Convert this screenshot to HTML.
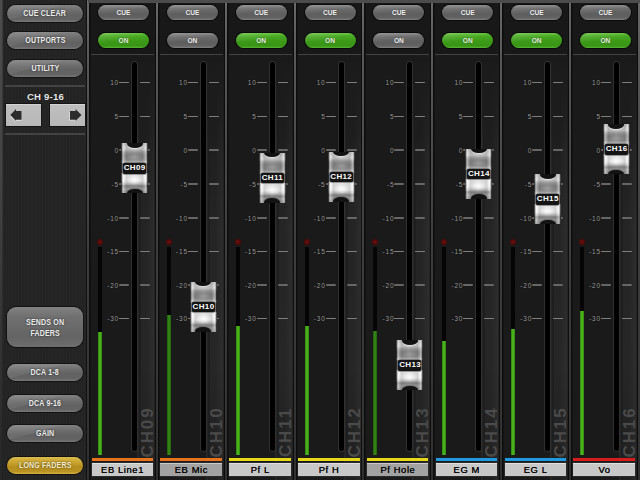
<!DOCTYPE html><html><head><meta charset="utf-8"><style>

*{margin:0;padding:0;box-sizing:border-box}
html,body{width:640px;height:480px;overflow:hidden;background:#1a1a1a;font-family:"Liberation Sans",sans-serif}
.abs{position:absolute}
#left{position:absolute;left:0;top:0;width:88px;height:480px;background:#242424;
 background-image:repeating-linear-gradient(90deg,rgba(255,255,255,0.012) 0 1px,rgba(0,0,0,0.025) 1px 3px)}
#left .edge{position:absolute;left:0;top:0;width:3px;height:480px;background:linear-gradient(90deg,rgba(0,0,0,0),rgba(0,0,0,0) 65%,rgba(0,0,0,.4)),linear-gradient(#4c4c4c,#444 35%,#363636 65%,#262626)}
.btn{position:absolute;left:7px;width:76px;height:17px;border-radius:9px;
 background:linear-gradient(165deg,rgba(255,255,255,.1) 0,rgba(255,255,255,.06) 40%,rgba(255,255,255,0) 41%),linear-gradient(#828282,#6c6c6c 35%,#626262 60%,#646464 85%,#787878);
 box-shadow:0 0 0 1px #121212;color:#eeeeee;font-weight:bold;font-size:7.8px;letter-spacing:0.2px;text-align:center;line-height:17px;
 text-shadow:0 0 2px #222}
.btn span{display:inline-block;transform:scale(0.9,1.1)}
.sep{position:absolute;height:2px;background:#434343}
.arrow{position:absolute;top:104px;height:22px;background:linear-gradient(#d4d4d4 0,#d4d4d4 1px,#bebebe 1.5px,#b8b8b8);box-shadow:0 0 0 1px #141414}
.strip{position:absolute;top:0;width:69px;height:480px;background:#1a1a1a}
.upper{position:absolute;left:0;top:0;width:69px;height:55px;background:#181818}
.div{position:absolute;top:0;width:2px;height:480px;background:linear-gradient(#6a6a6a,#585858 12%,#3e3e3e 50%,#303030 100%);box-shadow:-1px 0 0 rgba(0,0,0,.5),1.5px 0 0 rgba(0,0,0,.5)}
.topband{position:absolute;left:88px;top:0;width:552px;height:3px;background:#4c4c4c}
.cue{position:absolute;left:11px;width:51px;height:15px;border-radius:8px;
 background:linear-gradient(170deg,rgba(255,255,255,.12),rgba(255,255,255,0) 45%),linear-gradient(#8a8a8a,#6c6c6c 25%,#5e5e5e 60%,#626262 85%,#808080);
 box-shadow:0 0 0 1px #0a0a0a;color:#f2f2f2;font-size:6.6px;font-weight:bold;text-align:center;line-height:15px;
 text-shadow:0 0 1px #333}
.on{background:linear-gradient(170deg,rgba(255,255,255,.18),rgba(255,255,255,0) 45%),linear-gradient(#64c23a 0,#48a822 22%,#3c9a18 55%,#399416 85%,#56b230 100%);color:#e4f8dc}
.ssep{position:absolute;left:4px;top:53.6px;width:63px;height:1.8px;background:#434343}
.track{position:absolute;left:45px;top:61.5px;width:5px;height:389.5px;background:#000;border-radius:3px;box-shadow:0 0 0 1px #303030}
.rpanel{position:absolute;left:50px;top:62px;width:19px;height:418px;
 background:linear-gradient(90deg,#282828 0,#282828 1px,#1e1e1e 2.5px,#1e1e1e 50%,#242424 80%,#262626 88%,#161616 95%)}
.tick{position:absolute;height:1.7px;background:linear-gradient(#4e4e4e,#7e7e7e 50%,#4e4e4e);border-radius:1px}
.rpanel:after{content:"";position:absolute;left:0;top:0;width:19px;height:90px;background:linear-gradient(#1b1b1b,rgba(27,27,27,.6) 50%,rgba(27,27,27,0))}
.glow{position:absolute;left:4px;top:70px;width:16px;height:390px;background:linear-gradient(rgba(255,255,255,0),rgba(255,255,255,.03) 25%,rgba(255,255,255,.035) 60%,rgba(255,255,255,0))}
.lbl{position:absolute;width:24px;text-align:right;font-size:6.5px;color:#9c9c9c;line-height:8px;letter-spacing:0.8px;text-shadow:0 0 1px #000}
.meter{position:absolute;left:11px;top:246.5px;width:4px;height:208px;background:#050505}
.green{position:absolute;left:0;bottom:0;width:4px;background:linear-gradient(90deg,#2a8210,#54c020 50%,#2a8210)}
.red{position:absolute;left:10px;top:239px;width:6px;height:6px;border-radius:3px;background:radial-gradient(circle at 50% 50%,#6e1010,#4a0808 70%,#2a0404 100%)}
.vch{position:absolute;left:53.5px;top:407px;width:15px;height:49px;}
.vch span{position:absolute;left:50%;top:50%;transform:translate(-50%,-50%) rotate(-90deg);font-size:17px;font-weight:bold;color:#4a4a4a;white-space:nowrap;letter-spacing:1.9px}
.cbar{position:absolute;left:4.5px;top:457.5px;width:61.5px;height:3.5px}
.name{position:absolute;left:4.5px;top:462.5px;width:61.5px;height:13.5px;font-size:9.4px;color:#080808;text-align:center;line-height:12px;box-shadow:0 0 0 1px #2a2a2a;letter-spacing:0.6px;text-indent:0.6px;text-shadow:0 0 0.5px #000;border-top:1px solid rgba(255,255,255,.45)}
.cap{position:absolute;left:34px;width:27px;height:50px;overflow:hidden;
 background:
  radial-gradient(9px 4.5px at 50% 37px,rgba(255,255,255,.9),rgba(255,255,255,0)),
  linear-gradient(90deg,rgba(0,0,0,.8) 0,rgba(0,0,0,.55) 1px,rgba(255,255,255,.45) 1.8px,rgba(255,255,255,.15) 3px,rgba(0,0,0,.14) 5.5px,rgba(0,0,0,.06) 13.25px,rgba(0,0,0,.14) 21.5px,rgba(255,255,255,.15) 24px,rgba(255,255,255,.45) 25.2px,rgba(0,0,0,.55) 26px,rgba(0,0,0,.8) 27px),
  radial-gradient(8px 3.5px at 50% 14px,rgba(255,255,255,.2),rgba(255,255,255,0)),
  linear-gradient(#b8b8b8 0,#cccccc 6%,#d6d6d6 12%,#a2a2a2 18%,#8c8c8c 24%,#909090 30%,#9a9a9a 34%,#c0c0c0 38%,#b4b4b4 41%,#777 41%,#777 59%,#ececec 60%,#f6f6f6 66%,#f0f0f0 76%,#c8c8c8 82%,#8a8a8a 86%,#acacac 92%,#909090 100%)}
.cap:before,.cap:after{content:"";position:absolute;left:5.5px;width:16px;height:8.5px;border-radius:50%;background:#121212}
.cap:before{top:-4px;box-shadow:0 1px 1px rgba(255,255,255,.5)}
.cap:after{bottom:-4px;box-shadow:0 -1px 1px rgba(80,80,80,.6)}
.capl{position:absolute;left:2px;top:20.3px;width:23px;height:10.4px;background:#141414;border-radius:2px;box-shadow:0 0 0 0.6px #555;color:#fff;font-size:8px;font-weight:bold;text-align:center;line-height:10.4px;letter-spacing:0.35px;text-indent:0.35px}

</style></head><body>
<div id="left"><div class="edge"></div>
<div class="btn" style="top:5px"><span>CUE CLEAR</span></div>
<div class="btn" style="top:32px"><span>OUTPORTS</span></div>
<div class="btn" style="top:60px"><span>UTILITY</span></div>
<div class="sep" style="left:5px;top:85px;width:80px"></div>
<div class="abs" style="left:0;top:91px;width:91px;text-align:center;color:#e8e8e8;font-size:9.6px;font-weight:bold;line-height:12px;text-shadow:0 0 1px #000;letter-spacing:0.2px">CH 9-16</div>
<div class="arrow" style="left:6px;width:35.3px"><svg width="36" height="22" style="position:absolute;left:0;top:0"><path d="M4.8 11.5 L10.5 5.5 L10.5 7.5 L16 7.5 L16 16 L10.5 16 L10.5 17.5 Z" fill="#e2e2e2" transform="translate(-0.7,0.7)"/><path d="M4.3 11 L10 5 L10 7 L15.5 7 L15.5 15.7 L10 15.7 L10 17 Z" fill="#2c2c2c"/></svg></div>
<div class="arrow" style="left:50px;width:35px"><svg width="35" height="22" style="position:absolute;left:0;top:0"><path d="M31.5 11 L25.5 5 L25.5 7 L20 7 L20 15.7 L25.5 15.7 L25.5 17 Z" fill="#e2e2e2" transform="translate(-0.7,0.7)"/><path d="M31.5 11 L25.5 5 L25.5 7 L20 7 L20 15.7 L25.5 15.7 L25.5 17 Z" fill="#2c2c2c"/></svg></div>
<div class="sep" style="left:5px;top:133px;width:80px"></div>
<div class="btn" style="top:307px;height:40px;border-radius:9px;line-height:9.5px;padding-top:11px;background:linear-gradient(#828282,#707070 25%,#646464 75%,#6e6e6e)"><span>SENDS ON<br>FADERS</span></div>
<div class="btn" style="top:364px"><span>DCA 1-8</span></div>
<div class="btn" style="top:395px"><span>DCA 9-16</span></div>
<div class="btn" style="top:425px"><span>GAIN</span></div>
<div class="btn" style="top:457px;background:linear-gradient(#dcbc4c,#c8a22e 35%,#b48e1e 60%,#b89222 85%,#d2b244);color:#f4ecd4;text-shadow:0 0 2px #4a3a00"><span>LONG FADERS</span></div>
</div>
<div class="strip" style="left:87.0px">
<div class="upper"></div>
<div class="rpanel"><div class="glow"></div></div>
<div class="cue" style="top:5px">CUE</div>
<div class="cue on" style="top:33px">ON</div>
<div class="ssep"></div>
<div class="lbl" style="left:8px;top:79px">10</div>
<div class="tick" style="left:32px;width:10px;top:81.8px"></div>
<div class="tick" style="left:53px;width:10px;top:81.8px"></div>
<div class="lbl" style="left:8px;top:113px">5</div>
<div class="tick" style="left:32px;width:10px;top:115.8px"></div>
<div class="tick" style="left:53px;width:10px;top:115.8px"></div>
<div class="lbl" style="left:8px;top:146.5px">0</div>
<div class="tick" style="left:32px;width:10px;top:149.3px"></div>
<div class="tick" style="left:53px;width:10px;top:149.3px"></div>
<div class="lbl" style="left:8px;top:180.5px">-5</div>
<div class="tick" style="left:32px;width:10px;top:183.3px"></div>
<div class="tick" style="left:53px;width:10px;top:183.3px"></div>
<div class="lbl" style="left:8px;top:214.5px">-10</div>
<div class="tick" style="left:32px;width:10px;top:217.3px"></div>
<div class="tick" style="left:53px;width:10px;top:217.3px"></div>
<div class="lbl" style="left:8px;top:248px">-15</div>
<div class="tick" style="left:32px;width:10px;top:250.8px"></div>
<div class="tick" style="left:53px;width:10px;top:250.8px"></div>
<div class="lbl" style="left:8px;top:281.5px">-20</div>
<div class="tick" style="left:32px;width:10px;top:284.3px"></div>
<div class="tick" style="left:53px;width:10px;top:284.3px"></div>
<div class="lbl" style="left:8px;top:315px">-30</div>
<div class="tick" style="left:32px;width:10px;top:317.8px"></div>
<div class="tick" style="left:53px;width:10px;top:317.8px"></div>
<div class="red"></div>
<div class="meter"><div class="green" style="height:123px"></div></div>
<div class="track"></div>
<div class="vch"><span>CH09</span></div>
<div class="cbar" style="background:#e8731c"></div>
<div class="name" style="background:#c8c8c8">EB Line1</div>
<div class="cap" style="top:143px"><div class="capl">CH09</div></div>
</div>
<div class="div" style="left:87.0px"></div>
<div class="strip" style="left:155.85px">
<div class="upper"></div>
<div class="rpanel"><div class="glow"></div></div>
<div class="cue" style="top:5px">CUE</div>
<div class="cue" style="top:33px">ON</div>
<div class="ssep"></div>
<div class="lbl" style="left:8px;top:79px">10</div>
<div class="tick" style="left:32px;width:10px;top:81.8px"></div>
<div class="tick" style="left:53px;width:10px;top:81.8px"></div>
<div class="lbl" style="left:8px;top:113px">5</div>
<div class="tick" style="left:32px;width:10px;top:115.8px"></div>
<div class="tick" style="left:53px;width:10px;top:115.8px"></div>
<div class="lbl" style="left:8px;top:146.5px">0</div>
<div class="tick" style="left:32px;width:10px;top:149.3px"></div>
<div class="tick" style="left:53px;width:10px;top:149.3px"></div>
<div class="lbl" style="left:8px;top:180.5px">-5</div>
<div class="tick" style="left:32px;width:10px;top:183.3px"></div>
<div class="tick" style="left:53px;width:10px;top:183.3px"></div>
<div class="lbl" style="left:8px;top:214.5px">-10</div>
<div class="tick" style="left:32px;width:10px;top:217.3px"></div>
<div class="tick" style="left:53px;width:10px;top:217.3px"></div>
<div class="lbl" style="left:8px;top:248px">-15</div>
<div class="tick" style="left:32px;width:10px;top:250.8px"></div>
<div class="tick" style="left:53px;width:10px;top:250.8px"></div>
<div class="lbl" style="left:8px;top:281.5px">-20</div>
<div class="tick" style="left:32px;width:10px;top:284.3px"></div>
<div class="tick" style="left:53px;width:10px;top:284.3px"></div>
<div class="lbl" style="left:8px;top:315px">-30</div>
<div class="tick" style="left:32px;width:10px;top:317.8px"></div>
<div class="tick" style="left:53px;width:10px;top:317.8px"></div>
<div class="red"></div>
<div class="meter"><div class="green" style="height:140px;background:linear-gradient(90deg,#1c5e0c,#3a8e18 50%,#1c5e0c)"></div></div>
<div class="track"></div>
<div class="vch"><span>CH10</span></div>
<div class="cbar" style="background:#e8731c"></div>
<div class="name" style="background:#a2a2a2">EB Mic</div>
<div class="cap" style="top:281.5px"><div class="capl">CH10</div></div>
</div>
<div class="div" style="left:155.85px"></div>
<div class="strip" style="left:224.7px">
<div class="upper"></div>
<div class="rpanel"><div class="glow"></div></div>
<div class="cue" style="top:5px">CUE</div>
<div class="cue on" style="top:33px">ON</div>
<div class="ssep"></div>
<div class="lbl" style="left:8px;top:79px">10</div>
<div class="tick" style="left:32px;width:10px;top:81.8px"></div>
<div class="tick" style="left:53px;width:10px;top:81.8px"></div>
<div class="lbl" style="left:8px;top:113px">5</div>
<div class="tick" style="left:32px;width:10px;top:115.8px"></div>
<div class="tick" style="left:53px;width:10px;top:115.8px"></div>
<div class="lbl" style="left:8px;top:146.5px">0</div>
<div class="tick" style="left:32px;width:10px;top:149.3px"></div>
<div class="tick" style="left:53px;width:10px;top:149.3px"></div>
<div class="lbl" style="left:8px;top:180.5px">-5</div>
<div class="tick" style="left:32px;width:10px;top:183.3px"></div>
<div class="tick" style="left:53px;width:10px;top:183.3px"></div>
<div class="lbl" style="left:8px;top:214.5px">-10</div>
<div class="tick" style="left:32px;width:10px;top:217.3px"></div>
<div class="tick" style="left:53px;width:10px;top:217.3px"></div>
<div class="lbl" style="left:8px;top:248px">-15</div>
<div class="tick" style="left:32px;width:10px;top:250.8px"></div>
<div class="tick" style="left:53px;width:10px;top:250.8px"></div>
<div class="lbl" style="left:8px;top:281.5px">-20</div>
<div class="tick" style="left:32px;width:10px;top:284.3px"></div>
<div class="tick" style="left:53px;width:10px;top:284.3px"></div>
<div class="lbl" style="left:8px;top:315px">-30</div>
<div class="tick" style="left:32px;width:10px;top:317.8px"></div>
<div class="tick" style="left:53px;width:10px;top:317.8px"></div>
<div class="red"></div>
<div class="meter"><div class="green" style="height:129px"></div></div>
<div class="track"></div>
<div class="vch"><span>CH11</span></div>
<div class="cbar" style="background:#e8d81a"></div>
<div class="name" style="background:#c8c8c8">Pf L</div>
<div class="cap" style="top:152.5px"><div class="capl">CH11</div></div>
</div>
<div class="div" style="left:224.7px"></div>
<div class="strip" style="left:293.55px">
<div class="upper"></div>
<div class="rpanel"><div class="glow"></div></div>
<div class="cue" style="top:5px">CUE</div>
<div class="cue on" style="top:33px">ON</div>
<div class="ssep"></div>
<div class="lbl" style="left:8px;top:79px">10</div>
<div class="tick" style="left:32px;width:10px;top:81.8px"></div>
<div class="tick" style="left:53px;width:10px;top:81.8px"></div>
<div class="lbl" style="left:8px;top:113px">5</div>
<div class="tick" style="left:32px;width:10px;top:115.8px"></div>
<div class="tick" style="left:53px;width:10px;top:115.8px"></div>
<div class="lbl" style="left:8px;top:146.5px">0</div>
<div class="tick" style="left:32px;width:10px;top:149.3px"></div>
<div class="tick" style="left:53px;width:10px;top:149.3px"></div>
<div class="lbl" style="left:8px;top:180.5px">-5</div>
<div class="tick" style="left:32px;width:10px;top:183.3px"></div>
<div class="tick" style="left:53px;width:10px;top:183.3px"></div>
<div class="lbl" style="left:8px;top:214.5px">-10</div>
<div class="tick" style="left:32px;width:10px;top:217.3px"></div>
<div class="tick" style="left:53px;width:10px;top:217.3px"></div>
<div class="lbl" style="left:8px;top:248px">-15</div>
<div class="tick" style="left:32px;width:10px;top:250.8px"></div>
<div class="tick" style="left:53px;width:10px;top:250.8px"></div>
<div class="lbl" style="left:8px;top:281.5px">-20</div>
<div class="tick" style="left:32px;width:10px;top:284.3px"></div>
<div class="tick" style="left:53px;width:10px;top:284.3px"></div>
<div class="lbl" style="left:8px;top:315px">-30</div>
<div class="tick" style="left:32px;width:10px;top:317.8px"></div>
<div class="tick" style="left:53px;width:10px;top:317.8px"></div>
<div class="red"></div>
<div class="meter"><div class="green" style="height:129px"></div></div>
<div class="track"></div>
<div class="vch"><span>CH12</span></div>
<div class="cbar" style="background:#e8d81a"></div>
<div class="name" style="background:#c8c8c8">Pf H</div>
<div class="cap" style="top:151.5px"><div class="capl">CH12</div></div>
</div>
<div class="div" style="left:293.55px"></div>
<div class="strip" style="left:362.4px">
<div class="upper"></div>
<div class="rpanel"><div class="glow"></div></div>
<div class="cue" style="top:5px">CUE</div>
<div class="cue" style="top:33px">ON</div>
<div class="ssep"></div>
<div class="lbl" style="left:8px;top:79px">10</div>
<div class="tick" style="left:32px;width:10px;top:81.8px"></div>
<div class="tick" style="left:53px;width:10px;top:81.8px"></div>
<div class="lbl" style="left:8px;top:113px">5</div>
<div class="tick" style="left:32px;width:10px;top:115.8px"></div>
<div class="tick" style="left:53px;width:10px;top:115.8px"></div>
<div class="lbl" style="left:8px;top:146.5px">0</div>
<div class="tick" style="left:32px;width:10px;top:149.3px"></div>
<div class="tick" style="left:53px;width:10px;top:149.3px"></div>
<div class="lbl" style="left:8px;top:180.5px">-5</div>
<div class="tick" style="left:32px;width:10px;top:183.3px"></div>
<div class="tick" style="left:53px;width:10px;top:183.3px"></div>
<div class="lbl" style="left:8px;top:214.5px">-10</div>
<div class="tick" style="left:32px;width:10px;top:217.3px"></div>
<div class="tick" style="left:53px;width:10px;top:217.3px"></div>
<div class="lbl" style="left:8px;top:248px">-15</div>
<div class="tick" style="left:32px;width:10px;top:250.8px"></div>
<div class="tick" style="left:53px;width:10px;top:250.8px"></div>
<div class="lbl" style="left:8px;top:281.5px">-20</div>
<div class="tick" style="left:32px;width:10px;top:284.3px"></div>
<div class="tick" style="left:53px;width:10px;top:284.3px"></div>
<div class="lbl" style="left:8px;top:315px">-30</div>
<div class="tick" style="left:32px;width:10px;top:317.8px"></div>
<div class="tick" style="left:53px;width:10px;top:317.8px"></div>
<div class="red"></div>
<div class="meter"><div class="green" style="height:124px;background:linear-gradient(90deg,#1c5e0c,#3a8e18 50%,#1c5e0c)"></div></div>
<div class="track"></div>
<div class="vch"><span>CH13</span></div>
<div class="cbar" style="background:#e8d81a"></div>
<div class="name" style="background:#a2a2a2">Pf Hole</div>
<div class="cap" style="top:340px"><div class="capl">CH13</div></div>
</div>
<div class="div" style="left:362.4px"></div>
<div class="strip" style="left:431.25px">
<div class="upper"></div>
<div class="rpanel"><div class="glow"></div></div>
<div class="cue" style="top:5px">CUE</div>
<div class="cue on" style="top:33px">ON</div>
<div class="ssep"></div>
<div class="lbl" style="left:8px;top:79px">10</div>
<div class="tick" style="left:32px;width:10px;top:81.8px"></div>
<div class="tick" style="left:53px;width:10px;top:81.8px"></div>
<div class="lbl" style="left:8px;top:113px">5</div>
<div class="tick" style="left:32px;width:10px;top:115.8px"></div>
<div class="tick" style="left:53px;width:10px;top:115.8px"></div>
<div class="lbl" style="left:8px;top:146.5px">0</div>
<div class="tick" style="left:32px;width:10px;top:149.3px"></div>
<div class="tick" style="left:53px;width:10px;top:149.3px"></div>
<div class="lbl" style="left:8px;top:180.5px">-5</div>
<div class="tick" style="left:32px;width:10px;top:183.3px"></div>
<div class="tick" style="left:53px;width:10px;top:183.3px"></div>
<div class="lbl" style="left:8px;top:214.5px">-10</div>
<div class="tick" style="left:32px;width:10px;top:217.3px"></div>
<div class="tick" style="left:53px;width:10px;top:217.3px"></div>
<div class="lbl" style="left:8px;top:248px">-15</div>
<div class="tick" style="left:32px;width:10px;top:250.8px"></div>
<div class="tick" style="left:53px;width:10px;top:250.8px"></div>
<div class="lbl" style="left:8px;top:281.5px">-20</div>
<div class="tick" style="left:32px;width:10px;top:284.3px"></div>
<div class="tick" style="left:53px;width:10px;top:284.3px"></div>
<div class="lbl" style="left:8px;top:315px">-30</div>
<div class="tick" style="left:32px;width:10px;top:317.8px"></div>
<div class="tick" style="left:53px;width:10px;top:317.8px"></div>
<div class="red"></div>
<div class="meter"><div class="green" style="height:114px"></div></div>
<div class="track"></div>
<div class="vch"><span>CH14</span></div>
<div class="cbar" style="background:#1e9be0"></div>
<div class="name" style="background:#c8c8c8">EG M</div>
<div class="cap" style="top:148.5px"><div class="capl">CH14</div></div>
</div>
<div class="div" style="left:431.25px"></div>
<div class="strip" style="left:500.1px">
<div class="upper"></div>
<div class="rpanel"><div class="glow"></div></div>
<div class="cue" style="top:5px">CUE</div>
<div class="cue on" style="top:33px">ON</div>
<div class="ssep"></div>
<div class="lbl" style="left:8px;top:79px">10</div>
<div class="tick" style="left:32px;width:10px;top:81.8px"></div>
<div class="tick" style="left:53px;width:10px;top:81.8px"></div>
<div class="lbl" style="left:8px;top:113px">5</div>
<div class="tick" style="left:32px;width:10px;top:115.8px"></div>
<div class="tick" style="left:53px;width:10px;top:115.8px"></div>
<div class="lbl" style="left:8px;top:146.5px">0</div>
<div class="tick" style="left:32px;width:10px;top:149.3px"></div>
<div class="tick" style="left:53px;width:10px;top:149.3px"></div>
<div class="lbl" style="left:8px;top:180.5px">-5</div>
<div class="tick" style="left:32px;width:10px;top:183.3px"></div>
<div class="tick" style="left:53px;width:10px;top:183.3px"></div>
<div class="lbl" style="left:8px;top:214.5px">-10</div>
<div class="tick" style="left:32px;width:10px;top:217.3px"></div>
<div class="tick" style="left:53px;width:10px;top:217.3px"></div>
<div class="lbl" style="left:8px;top:248px">-15</div>
<div class="tick" style="left:32px;width:10px;top:250.8px"></div>
<div class="tick" style="left:53px;width:10px;top:250.8px"></div>
<div class="lbl" style="left:8px;top:281.5px">-20</div>
<div class="tick" style="left:32px;width:10px;top:284.3px"></div>
<div class="tick" style="left:53px;width:10px;top:284.3px"></div>
<div class="lbl" style="left:8px;top:315px">-30</div>
<div class="tick" style="left:32px;width:10px;top:317.8px"></div>
<div class="tick" style="left:53px;width:10px;top:317.8px"></div>
<div class="red"></div>
<div class="meter"><div class="green" style="height:126px"></div></div>
<div class="track"></div>
<div class="vch"><span>CH15</span></div>
<div class="cbar" style="background:#1e9be0"></div>
<div class="name" style="background:#c8c8c8">EG L</div>
<div class="cap" style="top:174px"><div class="capl">CH15</div></div>
</div>
<div class="div" style="left:500.1px"></div>
<div class="strip" style="left:568.95px">
<div class="upper"></div>
<div class="rpanel"><div class="glow"></div></div>
<div class="cue" style="top:5px">CUE</div>
<div class="cue on" style="top:33px">ON</div>
<div class="ssep"></div>
<div class="lbl" style="left:8px;top:79px">10</div>
<div class="tick" style="left:32px;width:10px;top:81.8px"></div>
<div class="tick" style="left:53px;width:10px;top:81.8px"></div>
<div class="lbl" style="left:8px;top:113px">5</div>
<div class="tick" style="left:32px;width:10px;top:115.8px"></div>
<div class="tick" style="left:53px;width:10px;top:115.8px"></div>
<div class="lbl" style="left:8px;top:146.5px">0</div>
<div class="tick" style="left:32px;width:10px;top:149.3px"></div>
<div class="tick" style="left:53px;width:10px;top:149.3px"></div>
<div class="lbl" style="left:8px;top:180.5px">-5</div>
<div class="tick" style="left:32px;width:10px;top:183.3px"></div>
<div class="tick" style="left:53px;width:10px;top:183.3px"></div>
<div class="lbl" style="left:8px;top:214.5px">-10</div>
<div class="tick" style="left:32px;width:10px;top:217.3px"></div>
<div class="tick" style="left:53px;width:10px;top:217.3px"></div>
<div class="lbl" style="left:8px;top:248px">-15</div>
<div class="tick" style="left:32px;width:10px;top:250.8px"></div>
<div class="tick" style="left:53px;width:10px;top:250.8px"></div>
<div class="lbl" style="left:8px;top:281.5px">-20</div>
<div class="tick" style="left:32px;width:10px;top:284.3px"></div>
<div class="tick" style="left:53px;width:10px;top:284.3px"></div>
<div class="lbl" style="left:8px;top:315px">-30</div>
<div class="tick" style="left:32px;width:10px;top:317.8px"></div>
<div class="tick" style="left:53px;width:10px;top:317.8px"></div>
<div class="red"></div>
<div class="meter"><div class="green" style="height:144px"></div></div>
<div class="track"></div>
<div class="vch"><span>CH16</span></div>
<div class="cbar" style="background:#d81c1c"></div>
<div class="name" style="background:#c8c8c8">Vo</div>
<div class="cap" style="top:124px"><div class="capl">CH16</div></div>
</div>
<div class="div" style="left:568.95px"></div>
<div class="div" style="left:638px"></div>
<div class="topband"></div>
</body></html>
